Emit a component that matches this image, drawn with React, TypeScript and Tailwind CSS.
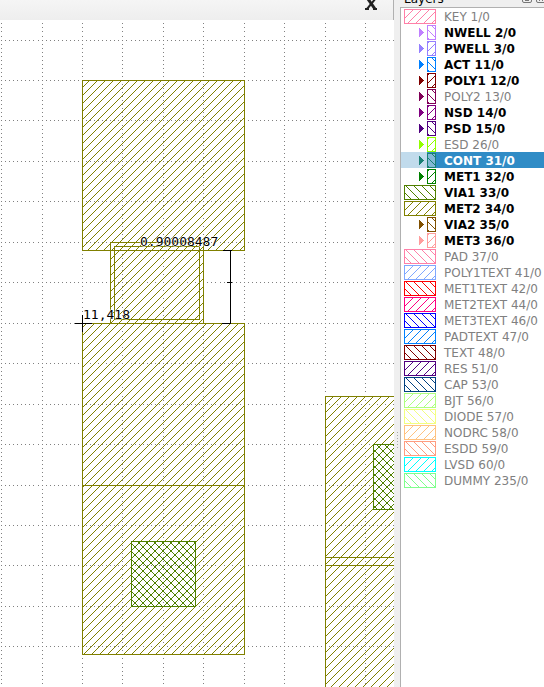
import React from "react";

const OLIVE = "#808000";
const GREEN = "#4f8000";

type Layer = {
  name: string;
  color: string;
  bold?: boolean;
  child?: boolean;
  selected?: boolean;
};

const layers: Layer[] = [
  { name: "KEY 1/0", color: "#ff80a8" },
  { name: "NWELL 2/0", color: "#c080ff", bold: true, child: true },
  { name: "PWELL 3/0", color: "#9580ff", bold: true, child: true },
  { name: "ACT 11/0", color: "#0080ff", bold: true, child: true },
  { name: "POLY1 12/0", color: "#800000", bold: true, child: true },
  { name: "POLY2 13/0", color: "#800057", child: true },
  { name: "NSD 14/0", color: "#800080", bold: true, child: true },
  { name: "PSD 15/0", color: "#500080", bold: true, child: true },
  { name: "ESD 26/0", color: "#91ff00", child: true },
  { name: "CONT 31/0", color: "#198074", bold: true, child: true, selected: true },
  { name: "MET1 32/0", color: "#008000", bold: true, child: true },
  { name: "VIA1 33/0", color: "#508000", bold: true },
  { name: "MET2 34/0", color: "#808000", bold: true },
  { name: "VIA2 35/0", color: "#805000", bold: true, child: true },
  { name: "MET3 36/0", color: "#ff9d9d", bold: true, child: true },
  { name: "PAD 37/0", color: "#ff80a8" },
  { name: "POLY1TEXT 41/0", color: "#80a8ff" },
  { name: "MET1TEXT 42/0", color: "#ff0000" },
  { name: "MET2TEXT 44/0", color: "#ff0080" },
  { name: "MET3TEXT 46/0", color: "#0000ff" },
  { name: "PADTEXT 47/0", color: "#0080ff" },
  { name: "TEXT 48/0", color: "#800000" },
  { name: "RES 51/0", color: "#500080" },
  { name: "CAP 53/0", color: "#004080" },
  { name: "BJT 56/0", color: "#afff80" },
  { name: "DIODE 57/0", color: "#f3ff80" },
  { name: "NODRC 58/0", color: "#ffc280" },
  { name: "ESDD 59/0", color: "#ff9d80" },
  { name: "LVSD 60/0", color: "#00ffff" },
  { name: "DUMMY 235/0", color: "#80ff8d" },
];

const steps = [0, 1, 2, 3, 4, 5, 6, 7];
const gripDots = [0, 1, 2, 3, 4, 5];

/* One-pixel diagonal hatch, repeated every eight pixels. */
function Hatch({ id, color, phase, back }: { id: string; color: string; phase: number; back?: boolean }) {
  return (
    <pattern id={id} width="8" height="8" patternUnits="userSpaceOnUse">
      {steps.map((y) => (
        <rect key={y} x={(phase + (back ? y : 8 - y)) % 8} y={y} width="1" height="1" fill={color} />
      ))}
    </pattern>
  );
}

function Swatch({ color, index, child, selected }: { color: string; index: number; child?: boolean; selected?: boolean }) {
  const back = index % 2 === 1;
  const id = `layer-${index}`;
  return (
    <svg width="35" height="16" className="shrink-0" shapeRendering="crispEdges" aria-hidden="true">
      <defs>
        <Hatch id={id} color={color} phase={back && !child ? 3 : 5} back={back} />
      </defs>
      {selected && <rect x="0" y="0" width="26" height="16" fill="#c1dbec" />}
      {child && <path d="M18 4v9l5-4.500z" fill={color} />}
      {child ? (
        <>
          <rect x="26" y="1" width="9" height="15" fill={selected ? "#83b8d6" : "#fff"} />
          <rect x="26" y="1" width="8" height="14" fill={`url(#${id})`} />
          <rect x="26.500" y="1.500" width="8" height="14" fill="none" stroke={color} />
        </>
      ) : (
        <>
          <rect x="3" y="1" width="31" height="14" fill={`url(#${id})`} />
          <rect x="3.500" y="1.500" width="31" height="14" fill="none" stroke={color} />
        </>
      )}
    </svg>
  );
}

const STEP = 40.45;
const gridX = Array.from({ length: 40 }, (_, i) => Math.floor(1.6 + i * STEP));
const gridY = Array.from({ length: 30 }, (_, i) => Math.floor(40.07 + (i - 1) * STEP));
const dotX = Array.from({ length: 400 }, (_, i) => Math.floor(1.6 + (i * STEP) / 10));
const dotY = Array.from({ length: 300 }, (_, i) => Math.floor(40.07 + ((i - 10) * STEP) / 10));

const gridPath =
  gridY.map((y) => dotX.map((x) => `M${x} ${y}h1v1h-1z`).join("")).join("") +
  gridX.map((x) => dotY.map((y) => `M${x} ${y}h1v1h-1z`).join("")).join("");

function Shape({ x, y, w, h, via }: { x: number; y: number; w: number; h: number; via?: boolean }) {
  return (
    <>
      <rect x={x} y={y} width={w} height={h} fill={via ? "url(#via-cross)" : "url(#metal)"} />
      {via && <rect x={x} y={y} width={w} height={h} fill="url(#via)" />}
      <rect x={x + 0.5} y={y + 0.5} width={w} height={h} fill="none" stroke={via ? GREEN : OLIVE} />
    </>
  );
}

function Drawing() {
  return (
    <svg
      viewBox="0 20 394 667"
      preserveAspectRatio="xMinYMin slice"
      className="block min-h-0 w-full flex-1"
      shapeRendering="crispEdges"
      role="img"
      aria-label="Layout view"
    >
      <defs>
        <Hatch id="metal" color={OLIVE} phase={1} />
        <Hatch id="via-cross" color={GREEN} phase={1} />
        <Hatch id="via" color={GREEN} phase={4} back />
      </defs>
      <rect x="0" y="20" width="1600" height="1200" fill="#fff" />
      <path d={gridPath} fill="#808080" />
      <Shape x={82} y={80} w={162} h={170} />
      <Shape x={110} y={242} w={93} h={81} />
      <Shape x={114} y={246} w={85} h={73} />
      <Shape x={82} y={323} w={162} h={162} />
      <Shape x={82} y={485} w={162} h={169} />
      <Shape x={131} y={541} w={64} h={65} via />
      <Shape x={325} y={396} w={162} h={169} />
      <Shape x={325} y={557} w={162} h={170} />
      <Shape x={373} y={444} w={64} h={65} via />
      <path d="M75 323.500h17M82.500 315v17M222 323.500h9M223 250.500h9M230.500 250v74M227 282.500h5" stroke="#000" fill="none" />
      <g fontFamily="'DejaVu Sans Mono', monospace" fontSize="13" fill="#000" stroke="#fff" strokeWidth="1" paintOrder="stroke">
        <text x="140" y="246">0.90008487</text>
        <text x="83" y="319">11,418</text>
      </g>
    </svg>
  );
}

export default function App() {
  return (
    <div className="flex h-screen overflow-hidden bg-[#efefef] font-['DejaVu_Sans',sans-serif] text-xs text-black">
      <main className="flex min-w-0 flex-1 flex-col">
        <div className="flex h-5 shrink-0 justify-end border-r border-[#b0b0b0] bg-linear-to-b from-[#f5f5f5] to-[#eeeeee] pr-3.5">
          <button type="button" aria-label="Close" className="h-3 w-4">
            <svg width="16" height="12" viewBox="0 0 16 12" aria-hidden="true">
              <path d="M5 -1L12 9" stroke="#222" strokeWidth="3" />
              <path d="M13 -2L4 9M2 9h4M10 9h4" stroke="#222" strokeWidth="2" />
            </svg>
          </button>
        </div>
        <Drawing />
      </main>
      <div className="flex w-1.5 shrink-0 flex-col items-center justify-center gap-0.5 pb-0" aria-hidden="true">
        <div className="flex flex-col gap-0.5 pt-48">
          {gripDots.map((d) => (
            <span key={d} className="size-px bg-[#a8a8a8]" />
          ))}
        </div>
      </div>
      <aside className="flex w-36 shrink-0 flex-col">
        <header className="flex h-[7px] shrink-0 items-end justify-between pl-1">
          <h2>Layers</h2>
          <div className="flex h-full items-start gap-1">
            <button type="button" aria-label="Float panel" className="h-1 w-2.5">
              <svg width="10" height="4" viewBox="0 0 10 4" aria-hidden="true">
                <path d="M0.500 -2v3q0 1.500 1.500 1.500h6q1.500 0 1.500 -1.500v-3M3 0.500h4" stroke="#777" fill="none" />
              </svg>
            </button>
            <button type="button" aria-label="Close panel" className="h-1 w-2">
              <svg width="8" height="4" viewBox="0 0 8 4" aria-hidden="true">
                <path d="M0.500 -2v3q0 1.500 1.500 1.500h6M3 1l2 -2l2 2" stroke="#777" fill="none" />
              </svg>
            </button>
          </div>
        </header>
        <ul className="flex-1 border-t border-l border-[#b0b0b0] bg-white">
          {layers.map((l, i) => (
            <li
              key={l.name}
              className={`flex h-4 items-center gap-2 whitespace-nowrap ${l.selected ? "bg-[#308cc6] text-white" : l.bold ? "text-black" : "text-[#808080]"} ${l.bold ? "font-bold" : ""}`}
            >
              <Swatch color={l.color} index={i} child={l.child} selected={l.selected} />
              <span className="pt-0.5">{l.name}</span>
            </li>
          ))}
        </ul>
      </aside>
    </div>
  );
}
